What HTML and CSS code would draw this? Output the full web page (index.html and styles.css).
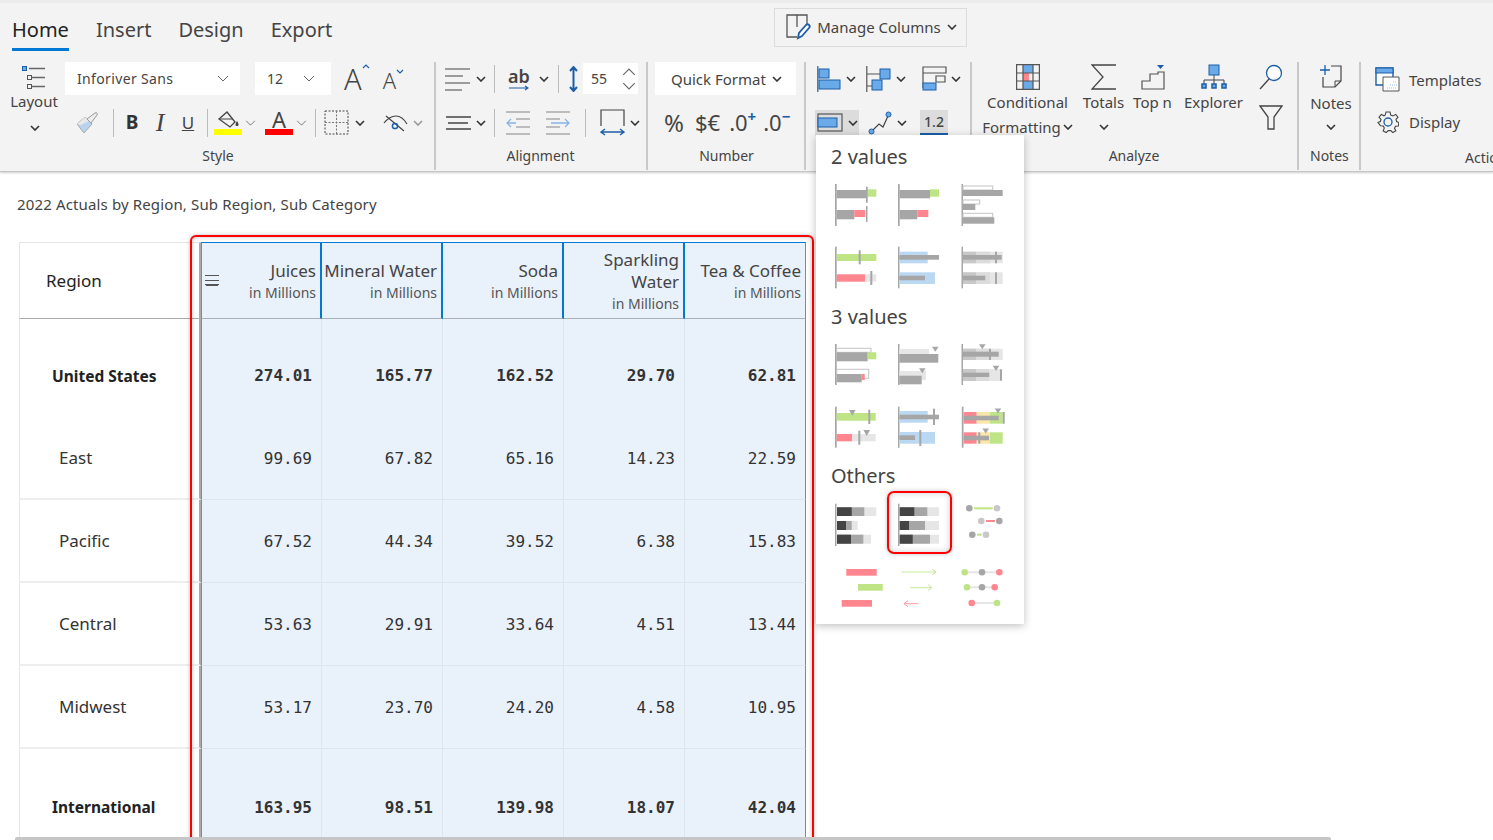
FILE: index.html
```html
<!DOCTYPE html>
<html>
<head>
    <title>2022 Actuals</title>
    <link rel="stylesheet" href="styles.css">
</head>
<body>
    <svg class="defs" width="0" height="0">
        <symbol id="chev" viewBox="0 0 10 6"><path d="M1 1l4 4 4-4" fill="none" stroke="currentColor" stroke-width="1.6"/></symbol>
        <symbol id="chev-thin" viewBox="0 0 12 7"><path d="M1 1l5 5 5-5" fill="none" stroke="currentColor" stroke-width="1"/></symbol>
    </svg>

    <header class="ribbon">
        <div class="tabs">
            <a class="tab active">Home</a>
            <a class="tab">Insert</a>
            <a class="tab">Design</a>
            <a class="tab">Export</a>
            <button class="manage">
                <svg width="26" height="28" viewBox="0 0 26 28"><path d="M12 24H2V2h20v9M12 2v12" fill="none" stroke="#555" stroke-width="1.3"/><path d="M13 25l1-5 7-8c2-2 5 1 3 3l-7 8z" fill="#fff" stroke="#1c5fa8" stroke-width="1.8"/></svg>
                <span>Manage Columns</span>
                <svg class="ch" width="10" height="6"><use href="#chev"/></svg>
            </button>
        </div>

        <div class="groups">
            <section class="group g-style">
                <div class="group-body">
                    <div class="tool w-layout">
                        <svg width="26" height="28" viewBox="0 0 26 28"><rect x="1.5" y="2.5" width="4" height="4" fill="#6aaae8" stroke="#1c5fa8"/><path d="M8 4.5h16M11 13.500h13M11 22.500h13" stroke="#666" stroke-width="1.300"/><rect x="6.500" y="11.500" width="4" height="4" fill="none" stroke="#555"/><rect x="6.500" y="20.500" width="4" height="4" fill="none" stroke="#555"/></svg>
                        <span class="tool-text">Layout</span>
                        <svg class="tool-ch" width="10" height="6"><use href="#chev"/></svg>
                    </div>
                    <div class="rows">
                        <div class="row">
                            <div class="select s-font"><span>Inforiver Sans</span><svg class="thin" width="12" height="7"><use href="#chev-thin"/></svg></div>
                            <div class="select s-size"><span>12</span><svg class="thin" width="12" height="7"><use href="#chev-thin"/></svg></div>
                            <span class="grow-a">A<svg width="8" height="5" viewBox="0 0 8 5"><path d="M1 4l3-3 3 3" fill="none" stroke="#1c5fa8" stroke-width="1.200"/></svg></span>
                            <span class="shrink-a">A<svg width="8" height="5" viewBox="0 0 8 5"><path d="M1 1l3 3 3-3" fill="none" stroke="#1c5fa8" stroke-width="1.200"/></svg></span>
                        </div>
                        <div class="row r-style">
                            <svg class="brush" width="24" height="24" viewBox="0 0 24 24"><path d="M2 13l8-7 7 7-8 9z" fill="#b9d3ee" stroke="#aaa"/><path d="M2 13l8-7 4 4-8 4z" fill="#e8e8e8"/><path d="M12 8l8-6c2-1 3 1 2 2l-6 8z" fill="#eee" stroke="#999"/></svg>
                            <i class="sep sp-a"></i>
                            <b class="fmt fmt-b">B</b>
                            <span class="fmt fmt-i">I</span>
                            <span class="fmt fmt-u">U</span>
                            <i class="sep sp-b"></i>
                            <span class="color-btn">
                                <svg width="24" height="19" viewBox="0 0 24 19"><path d="M3 9l8-7 8 10-5 5z" fill="none" stroke="#444" stroke-width="1.300"/><path d="M3 9h14" stroke="#444"/><path d="M21 11c-2 3-2 5 0 5s2-2 0-5z" fill="#444"/></svg>
                                <i class="swatch yellow"></i>
                            </span>
                            <svg class="thin sp-c" width="11" height="6"><use href="#chev-thin"/></svg>
                            <span class="color-btn letter">A<i class="swatch red"></i></span>
                            <svg class="thin sp-c" width="11" height="6"><use href="#chev-thin"/></svg>
                            <i class="sep sp-d"></i>
                            <svg class="sp-e" width="25" height="25" viewBox="0 0 25 25"><rect x="1" y="1" width="23" height="23" fill="none" stroke="#444" stroke-dasharray="2 1.500"/><path d="M12.500 1v23M1 12.500h23" stroke="#777" stroke-dasharray="2 1.500"/></svg>
                            <svg class="ch sp-f" width="10" height="6"><use href="#chev"/></svg>
                            <svg class="sp-g" width="25" height="19" viewBox="0 0 25 19"><path d="M1 10c4-5 8-7 12-7s8 3 11 8M3 3l18 15" fill="none" stroke="#444" stroke-width="1.200"/><circle cx="12" cy="13" r="2.600" fill="none" stroke="#1c5fa8" stroke-width="1.500"/></svg>
                            <svg class="ch grey sp-h" width="10" height="6"><use href="#chev"/></svg>
                        </div>
                    </div>
                </div>
                <div class="group-label">Style</div>
            </section>

            <section class="group g-align">
                <div class="group-body">
                    <div class="rows">
                        <div class="row">
                            <svg width="26" height="26" viewBox="0 0 26 26"><path d="M0 3h25M0 10h18M0 17h25M0 24h17" stroke="#444" stroke-width="1.200"/></svg>
                            <svg class="ch a1" width="10" height="6"><use href="#chev"/></svg>
                            <i class="sep a2"></i>
                            <span class="ab a3">ab<svg width="20" height="6" viewBox="0 0 20 6"><path d="M0 3h19M16 1l3 2-3 2" fill="none" stroke="#1c5fa8" stroke-width="1.200"/></svg></span>
                            <svg class="ch a4" width="10" height="6"><use href="#chev"/></svg>
                            <i class="sep a5"></i>
                            <svg class="a6" width="9" height="26" viewBox="0 0 9 26"><path d="M4.500 1v24M1 5l3.500-4L8 5M1 21l3.500 4L8 21" fill="none" stroke="#1c5fa8" stroke-width="2"/></svg>
                            <div class="select s-height"><span>55</span><span class="spin"><svg class="thin" width="14" height="8" viewBox="0 0 12 7"><path d="M1 6l5-5 5 5" fill="none" stroke="currentColor"/></svg><svg class="thin" width="14" height="8"><use href="#chev-thin"/></svg></span></div>
                        </div>
                        <div class="row">
                            <svg width="26" height="16" viewBox="0 0 26 16"><path d="M1 2h25M3 8h20M1 14h25" stroke="#444" stroke-width="1.300"/></svg>
                            <svg class="ch a1" width="10" height="6"><use href="#chev"/></svg>
                            <i class="sep a2"></i>
                            <svg class="a7" width="24" height="26" viewBox="0 0 24 26"><path d="M0 2h24M10 9h14M10 17h14M0 24h24" stroke="#aaa" stroke-width="1.300"/><path d="M10 13H1M5 9l-4 4 4 4" fill="none" stroke="#86b4e6" stroke-width="1.300"/></svg>
                            <svg class="a8" width="24" height="26" viewBox="0 0 24 26"><path d="M0 2h24M0 9h14M0 17h14M0 24h24" stroke="#aaa" stroke-width="1.300"/><path d="M5 13h18M19 9l4 4-4 4" fill="none" stroke="#86b4e6" stroke-width="1.300"/></svg>
                            <i class="sep a9"></i>
                            <svg class="a10" width="25" height="27" viewBox="0 0 25 27"><path d="M1 17V1h23v16" fill="none" stroke="#444" stroke-width="1.200"/><path d="M1 23h23M5 20l-4 3 4 3M20 20l4 3-4 3" fill="none" stroke="#1c5fa8" stroke-width="1.400"/></svg>
                            <svg class="ch a11" width="10" height="6"><use href="#chev"/></svg>
                        </div>
                    </div>
                </div>
                <div class="group-label">Alignment</div>
            </section>

            <section class="group g-number">
                <div class="group-body">
                    <div class="rows">
                        <div class="row">
                            <div class="select s-quick"><span>Quick Format</span><svg class="ch" width="10" height="6"><use href="#chev"/></svg></div>
                        </div>
                        <div class="row r-number">
                            <span class="num-btn n1">%</span>
                            <span class="num-btn n2">$€</span>
                            <span class="num-btn n3">.0<sup>+</sup></span>
                            <span class="num-btn n4">.0<sup>−</sup></span>
                        </div>
                    </div>
                </div>
                <div class="group-label">Number</div>
            </section>

            <section class="group g-chart">
                <div class="group-body">
                    <div class="rows">
                        <div class="row">
                            <svg width="24" height="26" viewBox="0 0 24 26"><path d="M.8 0v26" stroke="#1c5fa8" stroke-width="1.200"/><rect x="2" y="3" width="10" height="9" fill="#6aaae8" stroke="#1c5fa8"/><rect x="2" y="14" width="21" height="9" fill="#6aaae8" stroke="#1c5fa8"/></svg>
                            <svg class="ch c1" width="10" height="6"><use href="#chev"/></svg>
                            <svg class="c2" width="26" height="26" viewBox="0 0 26 26"><path d="M.8 0v26M.8 8H14M.8 20H10" stroke="#555" stroke-width="1.200"/><rect x="14" y="3" width="10" height="10" fill="#6aaae8" stroke="#1c5fa8"/><rect x="6" y="14" width="10" height="10" fill="#6aaae8" stroke="#1c5fa8"/></svg>
                            <svg class="ch c3" width="10" height="6"><use href="#chev"/></svg>
                            <svg class="c4" width="25" height="26" viewBox="0 0 25 26"><path d="M1 1h23v6H1zM1 7v15M14 10h9v6h-9z" fill="none" stroke="#555" stroke-width="1.200"/><rect x="1" y="17" width="13" height="7" fill="#6aaae8" stroke="#1c5fa8"/></svg>
                            <svg class="ch c5" width="10" height="6"><use href="#chev"/></svg>
                        </div>
                        <div class="row r-chart">
                            <span class="tool-on">
                                <svg width="26" height="19" viewBox="0 0 26 19"><rect x="1" y="1" width="24" height="17" fill="none" stroke="#555" stroke-width="1.200"/><rect x="1" y="5" width="19" height="9" fill="#6aaae8" stroke="#1c5fa8"/></svg>
                                <svg class="ch" width="10" height="6"><use href="#chev"/></svg>
                            </span>
                            <svg class="c6" width="24" height="24" viewBox="0 0 24 24"><path d="M4 20l7-7 4 3 5-11" fill="none" stroke="#444" stroke-width="1.200"/><circle cx="3.500" cy="20.500" r="2.500" fill="#6aaae8" stroke="#1c5fa8"/><circle cx="20.500" cy="3.500" r="2.500" fill="#6aaae8" stroke="#1c5fa8"/></svg>
                            <svg class="ch c7" width="10" height="6"><use href="#chev"/></svg>
                            <span class="dec-btn">1.2</span>
                        </div>
                    </div>
                </div>
                <div class="group-label hidden">Chart</div>
            </section>

            <section class="group g-analyze">
                <div class="group-body">
                    <div class="tool w-cond">
                        <svg width="24" height="26" viewBox="0 0 24 26"><rect x="7" y="1" width="10" height="8" fill="#6aaae8"/><rect x="7" y="17" width="10" height="8" fill="#6aaae8"/><rect x="7" y="9" width="6" height="8" fill="#ff868f"/><path d="M.6.6h22.800v24.800H.6zM.6 9h22.800M.6 17h22.800M7 .6v24.800M17 .6v24.800" fill="none" stroke="#555" stroke-width="1.200"/></svg>
                        <span class="tool-text">Conditional</span>
                        <span class="tool-text second">Formatting<svg class="ch" width="10" height="6"><use href="#chev"/></svg></span>
                    </div>
                    <div class="tool w-totals">
                        <svg width="25" height="26" viewBox="0 0 25 26"><path d="M25 1H1l11 12L1 25h24" fill="none" stroke="#444" stroke-width="1.300"/></svg>
                        <span class="tool-text">Totals</span>
                        <svg class="tool-ch" width="10" height="6"><use href="#chev"/></svg>
                    </div>
                    <div class="tool w-topn">
                        <svg width="24" height="26" viewBox="0 0 24 26"><path d="M1 25v-8h8v-7h8V8h6v17z" fill="none" stroke="#555" stroke-width="1.200"/><path d="M16 1h7l-3.500 4z" fill="#1c5fa8"/></svg>
                        <span class="tool-text">Top n</span>
                    </div>
                    <div class="tool w-explorer">
                        <svg width="26" height="26" viewBox="0 0 26 26"><rect x="8" y="1" width="10" height="10" fill="#6aaae8" stroke="#1c5fa8"/><path d="M13 11v5M3 21v-5h20v5M13 16v5" fill="none" stroke="#444"/><g fill="#6aaae8" stroke="#1c5fa8" stroke-width="1.500"><rect x="1" y="20" width="4" height="4"/><rect x="11" y="20" width="4" height="4"/><rect x="21" y="20" width="4" height="4"/></g></svg>
                        <span class="tool-text">Explorer</span>
                    </div>
                    <div class="tool w-search">
                        <svg width="24" height="26" viewBox="0 0 24 26"><circle cx="15" cy="9" r="7.500" fill="#fff" stroke="#1c5fa8" stroke-width="1.300"/><path d="M10 15L1 25" stroke="#444" stroke-width="1.300"/></svg>
                        <svg class="filter" width="24" height="25" viewBox="0 0 24 25"><path d="M1 1h22l-8 11v12H9V12z" fill="none" stroke="#444" stroke-width="1.300"/></svg>
                    </div>
                </div>
                <div class="group-label">Analyze</div>
            </section>

            <section class="group g-notes">
                <div class="group-body">
                    <div class="tool w-notes">
                        <svg width="22" height="24" viewBox="0 0 22 24"><path d="M11 2h10v15l-6 6H3V13" fill="none" stroke="#444" stroke-width="1.200"/><path d="M15 23v-6h6" fill="none" stroke="#444"/><path d="M5 1v10M0 6h10" stroke="#1c5fa8" stroke-width="1.300"/></svg>
                        <span class="tool-text">Notes</span>
                        <svg class="tool-ch" width="10" height="6"><use href="#chev"/></svg>
                    </div>
                </div>
                <div class="group-label">Notes</div>
            </section>

            <section class="group g-actions">
                <div class="group-body">
                    <div class="side-list">
                        <div class="side-item">
                            <svg width="25" height="25" viewBox="0 0 25 25"><path d="M1 1h17v17H1z" fill="#fff" stroke="#1c5fa8" stroke-width="1.400"/><rect x="1" y="1" width="17" height="5" fill="#6aaae8" stroke="#1c5fa8"/><path d="M8 10h16v14H8z" fill="#fff" stroke="#555"/><path d="M12 21h10M15 18h7M18 15h4" stroke="#9bbfe6" stroke-dasharray="1 1"/></svg>
                            <span>Templates</span>
                        </div>
                        <div class="side-item">
                            <svg class="gear" width="22" height="22" viewBox="0 0 22 22"><path d="M9 1h4l.7 3 2.300 1 2.700-1.600 2.300 2.800L19 8.500l.6 2 2.400 1-.7 3.500-2.800.3-1 2 1.300 2.600-3 1.700-2-2h-2.600l-2 2-3-1.700L7.300 17l-1-2-2.800-.3L1 11.500l2.400-1 .6-2-2-2.300 2.300-2.800L7 4.800l1.300-.8z" fill="none" stroke="#444" stroke-width="1.100"/><circle cx="11" cy="11" r="4" fill="none" stroke="#1c5fa8" stroke-width="1.300"/></svg>
                            <span>Display</span>
                        </div>
                    </div>
                </div>
                <div class="group-label label-actions">Actions</div>
            </section>
        </div>
    </header>

    <main class="report">
        <div class="report-title">2022 Actuals by Region, Sub Region, Sub Category</div>
        <table class="grid">
            <thead>
                <tr>
                    <th class="region-head">Region</th>
                    <th class="first-col"><span class="col-menu"></span>Juices<small>in Millions</small></th>
                    <th>Mineral Water<small>in Millions</small></th>
                    <th>Soda<small>in Millions</small></th>
                    <th>Sparkling Water<small>in Millions</small></th>
                    <th class="last-col">Tea &amp; Coffee<small>in Millions</small></th>
                </tr>
            </thead>
            <tbody>
                <tr class="total no-line">
                    <td class="region">United States</td>
                    <td class="first-col">274.01</td><td>165.77</td><td>162.52</td><td>29.70</td><td class="last-col">62.81</td>
                </tr>
                <tr>
                    <td class="region">East</td>
                    <td class="first-col">99.69</td><td>67.82</td><td>65.16</td><td>14.23</td><td class="last-col">22.59</td>
                </tr>
                <tr>
                    <td class="region">Pacific</td>
                    <td class="first-col">67.52</td><td>44.34</td><td>39.52</td><td>6.38</td><td class="last-col">15.83</td>
                </tr>
                <tr>
                    <td class="region">Central</td>
                    <td class="first-col">53.63</td><td>29.91</td><td>33.64</td><td>4.51</td><td class="last-col">13.44</td>
                </tr>
                <tr>
                    <td class="region">Midwest</td>
                    <td class="first-col">53.17</td><td>23.70</td><td>24.20</td><td>4.58</td><td class="last-col">10.95</td>
                </tr>
                <tr class="total last">
                    <td class="region">International</td>
                    <td class="first-col">163.95</td><td>98.51</td><td>139.98</td><td>18.07</td><td class="last-col">42.04</td>
                </tr>
            </tbody>
        </table>
        <div class="callout"></div>
    </main>

    <div class="chart-menu">
        <h3>2 values</h3>
        <div class="chart-grid">
            <svg class="mini" viewBox="0 0 44 44"><rect class="g" x="1" y="1" width="1.700" height="42"/><rect class="g" x="2.700" y="7" width="30.600" height="8.300"/><rect class="lime" x="33.300" y="6.300" width="9" height="7.400"/><rect class="g" x="32" y="3.700" width="1.700" height="16"/><rect class="g" x="2.700" y="27" width="17.600" height="9.300"/><rect class="rose" x="20.300" y="27" width="11" height="7"/><rect class="g" x="32" y="23" width="1.500" height="16"/></svg>
            <svg class="mini" viewBox="0 0 44 44"><rect class="g" x="1" y="1" width="1.700" height="42"/><rect class="g" x="2.700" y="7" width="30.300" height="8.300"/><rect class="lime" x="33" y="6.300" width="9" height="7.400"/><rect class="g" x="2.700" y="27" width="17.600" height="9.300"/><rect class="rose" x="20.300" y="27" width="11" height="7"/></svg>
            <svg class="mini" viewBox="0 0 44 44"><rect class="g" x="1.500" y="1" width="1.500" height="42"/><rect class="out" x="3" y="3" width="29.700" height="4"/><rect class="g" x="3" y="7" width="39.700" height="6"/><rect class="out" x="3" y="17" width="16.700" height="4"/><rect class="g" x="3" y="21" width="12.300" height="6"/><rect class="out" x="3" y="30.300" width="29.700" height="4"/><rect class="g" x="3" y="34.300" width="31.300" height="6.400"/></svg>

            <svg class="mini" viewBox="0 0 44 44"><rect class="g" x="1" y="1.700" width="1.700" height="41.600"/><rect class="lime" x="2.700" y="9" width="39.600" height="7"/><rect class="g" x="24.700" y="5.300" width="2" height="14"/><rect class="rose" x="2.700" y="29.300" width="28.300" height="7.400"/><rect class="pale" x="31" y="29.300" width="11.300" height="7.400"/><rect class="g" x="36.300" y="26" width="2" height="14"/></svg>
            <svg class="mini" viewBox="0 0 44 44"><rect class="g" x="1" y="1.700" width="1.500" height="41.600"/><rect class="sky" x="2.300" y="6.700" width="28.400" height="11.600"/><rect class="g" x="2.300" y="10" width="39.700" height="4.700"/><rect class="sky" x="2.300" y="27.300" width="35.700" height="11.700"/><rect class="g" x="2.300" y="30.700" width="25.700" height="4.600"/></svg>
            <svg class="mini" viewBox="0 0 44 44"><rect class="g" x="1.500" y="1.700" width="1.500" height="41.600"/><rect class="pale" x="3" y="6.700" width="39.700" height="11.600"/><rect class="mid2" x="16" y="6.700" width="14" height="11.600"/><rect class="mid" x="3" y="6.700" width="13" height="11.600"/><rect class="g" x="3" y="10" width="38.700" height="4.700"/><rect class="g" x="35" y="6.700" width="2" height="11.600"/><rect class="pale" x="3" y="27.300" width="39.700" height="11.700"/><rect class="mid2" x="16" y="27.300" width="14" height="11.700"/><rect class="mid" x="3" y="27.300" width="13" height="11.700"/><rect class="g" x="3" y="30.700" width="22.300" height="4.600"/><rect class="g" x="35" y="27.300" width="2" height="11.700"/></svg>
        </div>

        <h3 class="next">3 values</h3>
        <div class="chart-grid">
            <svg class="mini" viewBox="0 0 44 44"><rect class="g" x="1" y="1" width="1.700" height="41"/><rect class="out" x="2.700" y="5.300" width="34.300" height="4"/><rect class="g" x="2.700" y="9.300" width="31" height="9"/><rect class="lime" x="33.700" y="9.300" width="8.600" height="7"/><rect class="out" x="2.700" y="26.300" width="32" height="9"/><rect class="g" x="2.700" y="31" width="25" height="8.300"/><rect class="rose" x="27.700" y="31" width="3" height="6"/></svg>
            <svg class="mini" viewBox="0 0 44 44"><rect class="g" x="1" y="1" width="1.500" height="41"/><rect class="pale" x="2.300" y="6" width="29.700" height="5"/><rect class="g" x="2.300" y="11" width="39" height="8.700"/><polygon class="g" points="35,3.700 41.600,3.700 38.300,8.700"/><rect class="pale" x="2.300" y="28" width="26.700" height="9"/><rect class="g" x="2.300" y="32.700" width="22.400" height="8.600"/><polygon class="g" points="22,25.300 28.600,25.300 25.300,30.300"/></svg>
            <svg class="mini" viewBox="0 0 44 44"><rect class="g" x="1.500" y="1" width="1.500" height="41"/><rect class="pale" x="3" y="5.700" width="39.700" height="11.300"/><rect class="mid2" x="16" y="5.700" width="14" height="11.300"/><rect class="mid" x="3" y="5.700" width="13" height="11.300"/><rect class="g" x="3" y="8.700" width="35.700" height="5"/><rect class="g" x="29" y="5.700" width="2" height="11.300"/><polygon class="g" points="19,1.300 25.600,1.300 22.300,6.300"/><rect class="pale" x="3" y="26" width="38" height="12"/><rect class="mid2" x="16" y="26" width="13" height="12"/><rect class="mid" x="3" y="26" width="13" height="12"/><rect class="g" x="3" y="29.700" width="26.300" height="4.300"/><polygon class="g" points="32.700,22.700 39.300,22.700 36,28"/><rect class="g" x="40" y="26.300" width="2" height="11.400"/></svg>

            <svg class="mini" viewBox="0 0 44 44"><rect class="g" x="1" y="1.700" width="1.700" height="41"/><rect class="lime" x="2.700" y="8" width="39" height="7.700"/><polygon class="g" points="15,5 21.600,5 18.300,10.700"/><rect class="g" x="34.300" y="4.700" width="2" height="14.300"/><rect class="rose" x="2.700" y="29" width="15.600" height="7.300"/><rect class="pale" x="18.300" y="29" width="23.400" height="7.300"/><rect class="g" x="24.300" y="25.700" width="2" height="14"/><polygon class="g" points="29.400,25 36,25 32.700,31"/></svg>
            <svg class="mini" viewBox="0 0 44 44"><rect class="g" x="1" y="1.700" width="1.500" height="41"/><rect class="sky" x="2.300" y="6" width="28.400" height="11.700"/><rect class="g" x="2.300" y="9.700" width="39.700" height="4.600"/><rect class="g" x="36" y="3.700" width="2" height="16.300"/><rect class="sky" x="2.300" y="27" width="35.700" height="11.700"/><rect class="g" x="2.300" y="30.300" width="15.700" height="4.700"/><rect class="g" x="22.300" y="25" width="2" height="16"/></svg>
            <svg class="mini" viewBox="0 0 44 44"><rect class="g" x="1.800" y="1.700" width="1.700" height="41"/><rect class="rose" x="3.700" y="7" width="13" height="11.700"/><rect class="sand" x="16.700" y="7" width="13.300" height="11.700"/><rect class="lime" x="30" y="7" width="12.700" height="11.700"/><rect class="g" x="3.700" y="10.700" width="35" height="4.600"/><rect class="g" x="42.700" y="7" width="2" height="11.700"/><polygon class="g" points="34.700,3.500 41.300,3.500 38,8.500"/><rect class="rose" x="3.700" y="27.300" width="13" height="11.400"/><rect class="sand" x="16.700" y="27.300" width="13.300" height="11.400"/><rect class="lime" x="30" y="27.300" width="12.700" height="11.400"/><rect class="g" x="3.700" y="30.700" width="25.300" height="4.600"/><rect class="g" x="18.300" y="27.300" width="2" height="11.400"/><polygon class="g" points="22.400,23.500 29,23.500 25.700,28.500"/></svg>
        </div>

        <h3 class="next others-title">Others</h3>
        <div class="chart-grid others">
            <svg class="mini" viewBox="0 0 44 44"><rect class="g" x="1" y=".7" width="1.500" height="42.300"/><rect class="pale" x="3" y="4.300" width="39.300" height="8.700"/><rect class="g" x="3" y="4.300" width="27.300" height="8.700"/><rect class="dark" x="3" y="4.300" width="14.700" height="8.700"/><rect class="pale" x="3" y="18" width="20.700" height="9"/><rect class="g" x="3" y="18" width="14.700" height="9"/><rect class="dark" x="3" y="18" width="9" height="9"/><rect class="pale" x="3" y="31.700" width="34" height="9"/><rect class="g" x="3" y="31.700" width="26.300" height="9"/><rect class="dark" x="3" y="31.700" width="14" height="9"/></svg>
            <div class="picked"><svg class="mini" viewBox="0 0 44 44"><rect class="g" x="1" y=".7" width="1.500" height="42.300"/><rect class="pale" x="2.700" y="4.300" width="39.300" height="8.700"/><rect class="g" x="2.700" y="4.300" width="27.600" height="8.700"/><rect class="dark" x="2.700" y="4.300" width="14.600" height="8.700"/><rect class="pale" x="2.700" y="18" width="39.300" height="9"/><rect class="g" x="2.700" y="18" width="25.300" height="9"/><rect class="dark" x="2.700" y="18" width="9.300" height="9"/><rect class="pale" x="2.700" y="31.700" width="39.300" height="9"/><rect class="g" x="2.700" y="31.700" width="30.300" height="9"/><rect class="dark" x="2.700" y="31.700" width="13" height="9"/></svg></div>
            <svg class="mini" viewBox="0 0 44 44"><rect class="lime" x="14" y="4.300" width="18.700" height="2"/><circle class="g" cx="9.300" cy="5.300" r="3.300"/><circle class="mid" cx="37" cy="5.300" r="3.300"/><rect class="rose" x="26" y="17" width="9" height="2"/><circle class="mid" cx="21.300" cy="18" r="3.300"/><circle class="g" cx="39.300" cy="18" r="3.300"/><rect class="lime" x="17" y="30.700" width="4.700" height="2"/><circle class="g" cx="12.300" cy="31.700" r="3.300"/><circle class="mid" cx="26" cy="31.700" r="3.300"/></svg>

            <svg class="mini" viewBox="0 0 44 44"><rect class="rose" x="12.300" y="2" width="30.400" height="6.700"/><rect class="lime" x="24" y="17" width="24.700" height="6.700"/><rect class="rose" x="7.700" y="33" width="30.300" height="6.700"/></svg>
            <svg class="mini" viewBox="0 0 44 44"><path d="M4 5h35M35 2l4 3-4 3" fill="none" stroke="#c9e99b"/><path d="M13 20.700h22M31 17.700l4 3-4 3" fill="none" stroke="#c9e99b"/><path d="M21.300 36.700h-14M11 33.700l-4 3 4 3" fill="none" stroke="#ff9aa2"/></svg>
            <svg class="mini" viewBox="0 0 44 44"><rect class="pale" x="4.700" y="4.300" width="34.600" height="2"/><circle class="lime" cx="4.700" cy="5.300" r="3.300"/><circle class="g" cx="22" cy="5.300" r="3.300"/><circle class="rose" cx="39.300" cy="5.300" r="3.300"/><rect class="pale" x="7" y="19.300" width="27.700" height="2"/><circle class="lime" cx="7" cy="20.300" r="3.300"/><circle class="g" cx="22" cy="20.300" r="3.300"/><circle class="rose" cx="34.700" cy="20.300" r="3.300"/><rect class="pale" x="11.700" y="35" width="25.300" height="2"/><circle class="rose" cx="11.700" cy="36" r="3.300"/><circle class="lime" cx="37" cy="36" r="3.300"/></svg>
        </div>
    </div>

    <div class="scroll-thumb"></div>
</body>
</html>
```

FILE: styles.css
```css
html, body {
    margin: 0;
    height: 100%;
    overflow: hidden;
}

body {
    position: relative;
    background-color: #fff;
    color: #444;
    font-family: "Noto Sans", Arial, sans-serif;
    font-size: 15px;
}

.defs {
    position: absolute;
}

svg {
    display: block;
    flex: none;
}

/* ribbon */
.ribbon {
    height: 168px;
    background-color: #f3f3f3;
    border-top: 3px solid #ececec;
    border-bottom: 1px solid #c6c6c6;
    box-shadow: 0 1px 2px rgba(0, 0, 0, 0.2);
}

.tabs {
    display: flex;
    height: 59px;
    padding-left: 12px;
    box-sizing: border-box;
}

.tab {
    height: 33px;
    margin-right: 27px;
    padding-top: 12px;
    font-size: 20px;
    line-height: 30px;
    color: #444;
}

.tab.active {
    color: #222;
    border-bottom: 3px solid #0078d4;
}

.manage {
    display: flex;
    align-items: center;
    width: 193px;
    height: 39px;
    margin: 5px 0 0 415px;
    padding: 0 0 2px 10px;
    background-color: #f3f3f3;
    border: 1px solid #dcdcdc;
    color: #444;
    font-family: inherit;
    font-size: 15px;
}

.manage span {
    margin: 0 6px 0 6px;
    white-space: nowrap;
}

.ch {
    color: #333;
}

.ch.grey {
    color: #999;
}

.thin {
    color: #666;
}

.groups {
    display: flex;
    height: 108px;
}

.group {
    box-sizing: border-box;
    border-right: 2px solid #c9c9c9;
}

.g-style { width: 436px; padding-left: 10px; }
.g-align { width: 212px; padding-left: 9px; }
.g-number { width: 158px; padding-left: 7px; }
.g-chart { width: 166px; padding-left: 9px; }
.g-analyze { width: 327px; padding-left: 9px; }
.g-notes { width: 62px; padding-left: 11px; }
.g-actions { flex: 1; border-right: 0; padding-left: 14px; min-width: 0; overflow: hidden; }

.group-body {
    display: flex;
    height: 84px;
}

.group-label {
    height: 20px;
    font-size: 14px;
    line-height: 20px;
    text-align: center;
}

.g-style .group-label { padding-right: 8px; }
.g-align .group-label { padding-right: 10px; }
.g-number .group-label { padding-right: 6px; }
.g-analyze .group-label { padding-right: 10px; }
.g-notes .group-label { padding-right: 11px; }

.group-label.hidden {
    visibility: hidden;
}

.group-label.label-actions {
    padding-left: 90px;
    margin-top: 2px;
    text-align: left;
    white-space: nowrap;
}

.rows {
    display: flex;
    flex-direction: column;
}

.row {
    display: flex;
    align-items: center;
    height: 33px;
    margin-bottom: 13px;
}

.row:last-child {
    height: 29px;
    margin-bottom: 0;
}

.sep {
    display: block;
    flex: none;
    width: 1px;
    height: 28px;
    background-color: #bbb;
}

/* icon over label columns */
.tool {
    display: flex;
    flex-direction: column;
    align-items: center;
    flex: none;
    padding-top: 2px;
}

.tool-text {
    height: 22px;
    margin-top: 1px;
    line-height: 22px;
    white-space: nowrap;
}

.tool-text.second {
    display: flex;
    align-items: center;
    gap: 2px;
    margin-top: 3px;
}

.tool-ch {
    margin-top: 11px;
    color: #333;
}

.w-layout { width: 48px; margin-right: 7px; }
.w-layout .tool-text { margin-top: -2px; }
.w-layout .tool-ch { margin: 13px 0 0 2px; }
.w-cond { width: 93px; }
.w-totals { width: 43px; margin-left: 8px; }
.w-topn { width: 39px; margin-left: 8px; }
.w-explorer { width: 61px; margin-left: 11px; }
.w-search { width: 24px; margin-left: 15px; }
.w-notes { width: 42px; }
.w-notes .tool-text { margin-top: 4px; }
.w-notes .tool-ch { margin-top: 10px; }

.filter {
    margin-top: 15px;
}

/* white inputs */
.select {
    display: flex;
    align-items: center;
    justify-content: space-between;
    box-sizing: border-box;
    height: 33px;
    background-color: #fff;
    font-size: 14px;
    color: #444;
}

.s-font { width: 175px; padding: 0 11px 0 12px; letter-spacing: 0.35px; }
.s-size { width: 76px; margin-left: 15px; padding: 0 16px 0 12px; }
.s-height { width: 55px; height: 31px; margin-left: 5px; padding: 0 2px 0 8px; }
.s-quick { width: 141px; margin-left: 0; padding: 0 14px 0 16px; font-size: 15px; }

.spin {
    display: flex;
    flex-direction: column;
    gap: 6px;
}

.grow-a,
.shrink-a {
    display: flex;
    align-items: flex-start;
    line-height: 1;
    font-weight: 300;
}

.grow-a { margin-left: 13px; font-size: 29px; }
.shrink-a { margin-left: 13px; font-size: 22px; padding-top: 2px; }

/* style group, second row */
.r-style .brush { margin-left: 10px; }
.sp-a { margin-left: 14px; }
.sp-b { margin-left: 12px; }
.sp-c { margin-left: 3px; }
.sp-d { margin-left: 8px; }
.sp-e { margin-left: 8px; }
.sp-f { margin-left: 6px; }
.sp-g { margin-left: 18px; }
.sp-h { margin-left: 5px; }

.fmt {
    width: 14px;
    font-size: 19px;
    line-height: 1;
    text-align: center;
}

.fmt-b { margin-left: 11px; color: #333; }
.fmt-i { margin-left: 14px; font-family: "Liberation Serif", serif; font-style: italic; font-size: 26px; }
.fmt-u { margin-left: 14px; text-decoration: underline; font-size: 17px; }

.color-btn {
    display: flex;
    flex-direction: column;
    align-items: center;
    flex: none;
    width: 28px;
    margin-left: 6px;
}

.color-btn.letter {
    margin-left: 9px;
    font-size: 22px;
    line-height: 19px;
}

.swatch {
    display: block;
    width: 28px;
    height: 6px;
}

.swatch.yellow { background-color: #ffff00; }
.swatch.red { background-color: #ff0000; }

/* alignment group */
.a1 { margin-left: 5px; }
.a2 { margin-left: 8px; }
.a3 { margin-left: 14px; }
.a4 { margin-left: 10px; }
.a5 { margin-left: 9px; }
.a6 { margin-left: 10px; }
.a7 { margin-left: 11px; }
.a8 { margin-left: 16px; }
.a9 { margin-left: 15px; }
.a10 { margin-left: 14px; }
.a11 { margin-left: 5px; }

.ab {
    display: flex;
    flex-direction: column;
    align-items: center;
    width: 20px;
    font-size: 18px;
    font-weight: 600;
    line-height: 18px;
    color: #444;
}

/* number group */
.r-number {
    align-items: flex-end;
}

.num-btn {
    font-size: 22px;
    line-height: 29px;
    white-space: nowrap;
}

.num-btn sup {
    font-size: 15px;
    font-weight: 700;
    line-height: 0;
    color: #1c5fa8;
    vertical-align: 9px;
}

.n1 { margin-left: 9px; font-size: 24px; }
.n2 { margin-left: 11px; }
.n3 { margin-left: 9px; }
.n4 { margin-left: 7px; }

/* chart group */
.c1 { margin-left: 5px; }
.c2 { margin-left: 10px; }
.c3 { margin-left: 4px; }
.c4 { margin-left: 16px; }
.c5 { margin-left: 4px; }
.c6 { margin-left: 9px; }
.c7 { margin-left: 5px; }
.g-chart .rows > .row:first-child { padding-left: 2px; }

.tool-on {
    display: flex;
    align-items: center;
    gap: 5px;
    box-sizing: border-box;
    width: 44px;
    height: 26px;
    padding-left: 2px;
    background-color: #dcdcdc;
}

.dec-btn {
    box-sizing: border-box;
    width: 28px;
    height: 25px;
    margin-left: 13px;
    background-color: #dcdcdc;
    border-bottom: 2px solid #1c5fa8;
    font-size: 14px;
    font-weight: 500;
    line-height: 23px;
    text-align: center;
}

/* actions */
.side-list {
    display: flex;
    flex-direction: column;
    padding-top: 5px;
}

.side-item {
    display: flex;
    align-items: center;
    gap: 9px;
    height: 25px;
    margin-bottom: 19px;
    white-space: nowrap;
}

.gear {
    margin: 0 1px 0 2px;
}

/* report */
.report {
    position: relative;
    padding: 21px 0 0 17px;
}

.report-title {
    height: 22px;
    margin-bottom: 27px;
    line-height: 22px;
    letter-spacing: 0.14px;
}

.grid {
    width: 787px;
    margin-left: 2px;
    border-collapse: separate;
    border-spacing: 0;
    table-layout: fixed;
    color: #333;
}

.grid th {
    position: relative;
    box-sizing: border-box;
    width: 121px;
    height: 77px;
    padding: 2px 4px 0 2px;
    background-color: #e9f1fb;
    border-top: 1px solid #0078d4;
    border-right: 2px solid #0078d4;
    border-bottom: 1px solid #aab0b8;
    font-size: 17px;
    font-weight: 400;
    line-height: 22px;
    text-align: right;
    color: #444;
}

.grid th small {
    display: block;
    font-size: 14px;
    line-height: 22px;
    color: #555;
}

.grid .region-head {
    width: 182px;
    padding: 0 0 0 26px;
    background-color: #fff;
    border-top: 1px solid #e6e6e6;
    border-left: 1px solid #e6e6e6;
    border-right: 2px solid #aaa;
    border-bottom-color: #aaa;
    text-align: left;
    color: #222;
}

.grid th.first-col,
.grid td.first-col {
    border-left: 1px solid #3f9ae0;
}

.col-menu {
    position: absolute;
    left: 3px;
    top: 32px;
    width: 14px;
    height: 8px;
    border-top: 1px solid #555;
    border-bottom: 1px solid #555;
    background: linear-gradient(#555, #555) center / 100% 1px no-repeat;
    box-shadow: 0 2px 0 -1px #555;
}

.grid td {
    box-sizing: border-box;
    height: 83px;
    padding: 0 9px 0 0;
    background-color: #e9f1fb;
    border-right: 1px solid #dde5ef;
    border-bottom: 1px solid #dce4ee;
    font-family: "DejaVu Sans Mono", monospace;
    font-size: 16px;
    text-align: right;
}

.grid td.last-col,
.grid th.last-col {
    border-right: 1px solid #3f9ae0;
}

.grid .region {
    padding: 0 0 0 39px;
    background-color: #fff;
    border-left: 1px solid #e6e6e6;
    border-right: 2px solid #aaa;
    border-bottom: 2px solid #eee;
    font-family: "Noto Sans", Arial, sans-serif;
    font-size: 17px;
    text-align: left;
    color: #333;
}

.total td {
    padding-top: 15px;
    height: 98px;
    font-weight: 700;
}

.grid .total .region {
    padding: 15px 0 0 32px;
    font-size: 15.5px;
    color: #222;
}

.no-line td,
.grid .no-line .region {
    border-bottom: 0;
}

.last td {
    height: 101px;
    border-bottom: 0;
}

.grid .last .region {
    border-bottom: 0;
}

.callout {
    position: absolute;
    left: 190px;
    top: 63px;
    box-sizing: border-box;
    width: 624px;
    height: 640px;
    border: 2px solid #ff0000;
    border-radius: 6px;
    box-shadow: 0 0 4px rgba(0, 0, 0, 0.25), inset 0 0 4px rgba(0, 0, 0, 0.25);
}

/* chart picker */
.chart-menu {
    position: absolute;
    left: 816px;
    top: 135px;
    box-sizing: border-box;
    width: 208px;
    height: 489px;
    padding: 8px 0 0 15px;
    background-color: #fff;
    box-shadow: 0 2px 8px rgba(0, 0, 0, 0.25);
}

.chart-menu h3 {
    height: 28px;
    margin: 0 0 12px;
    font-size: 20px;
    font-weight: 400;
    line-height: 28px;
    color: #444;
}

.chart-menu h3.next {
    margin-top: 14px;
}

.chart-menu h3.others-title {
    margin: 13px 0 13px;
}

.chart-grid {
    display: grid;
    grid-template-columns: repeat(3, 44px);
    column-gap: 19px;
    row-gap: 18px;
    padding-left: 3px;
}

.chart-grid.others {
    row-gap: 20px;
}

.mini {
    width: 44px;
    height: 44px;
    overflow: visible;
}

.mini .g { fill: #a6a6a6; }
.mini .lime { fill: #bfe486; }
.mini .rose { fill: #ff868f; }
.mini .sky { fill: #bbd8f3; }
.mini .pale { fill: #e6e6e6; }
.mini .mid { fill: #c8c8c8; }
.mini .mid2 { fill: #dcdcdc; }
.mini .dark { fill: #444; }
.mini .sand { fill: #f9e6a8; }
.mini .out { fill: #fff; stroke: #c4c4c4; }

.picked {
    position: relative;
}

.picked::after {
    content: "";
    position: absolute;
    top: -12px;
    right: -11px;
    bottom: -7px;
    left: -10px;
    border: 2px solid #ff0000;
    border-radius: 7px;
    box-shadow: 0 0 4px rgba(0, 0, 0, 0.25), inset 0 0 6px rgba(0, 0, 0, 0.2);
}

.scroll-thumb {
    position: absolute;
    left: 15px;
    bottom: 0;
    width: 1316px;
    height: 3px;
    background-color: #c6c6c6;
    border-radius: 2px 2px 0 0;
}
```
